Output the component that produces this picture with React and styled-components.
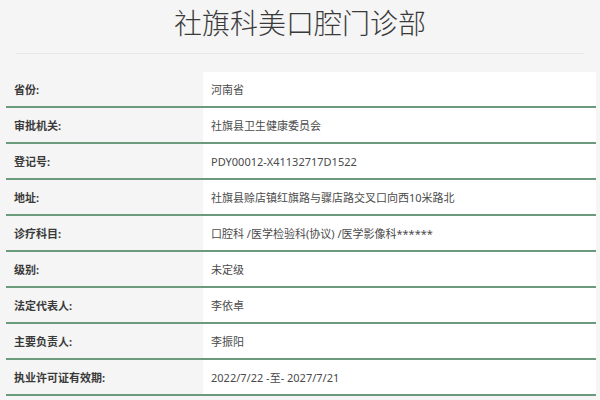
import React from 'react';
import styled, { createGlobalStyle } from 'styled-components';

const GlobalStyle = createGlobalStyle`
  body {
    margin: 0;
    background: #f5f5f5;
    font-family: "Noto Sans", "Noto Sans CJK SC", sans-serif;
  }
`;

const Page = styled.div`
  width: 600px;
  height: 400px;
  overflow: hidden;
`;

const Header = styled.div`
  height: 54px;
  border-bottom: 1px solid #e8e8e8;
  margin: 0 16px;
  box-sizing: border-box;
  padding-top: 5px;
  text-align: center;
`;

const Title = styled.h1`
  margin: 0;
  font-size: 28px;
  line-height: 34px;
  font-weight: 300;
  color: #3a3a3a;
  font-family: "Noto Sans CJK SC", sans-serif;
`;

const Table = styled.div`
  margin: 18px 4px 0 6px;
`;

const Row = styled.div`
  display: grid;
  grid-template-columns: 197px 1fr;
  height: 36px;
  border-bottom: 2px solid #6c9a7d;
  box-sizing: border-box;
`;

const Label = styled.div`
  display: flex;
  align-items: center;
  padding-left: 8px;
  font-size: 11px;
  font-weight: 700;
  color: #3a3a3a;
`;

const Value = styled.div`
  display: flex;
  align-items: center;
  padding-left: 8px;
  background: #fff;
  font-size: 11px;
  color: #4a4a4a;
`;

const rows = [
  ['省份:', '河南省'],
  ['审批机关:', '社旗县卫生健康委员会'],
  ['登记号:', 'PDY00012-X41132717D1522'],
  ['地址:', '社旗县赊店镇红旗路与骤店路交叉口向西10米路北'],
  ['诊疗科目:', '口腔科 /医学检验科(协议) /医学影像科******'],
  ['级别:', '未定级'],
  ['法定代表人:', '李依卓'],
  ['主要负责人:', '李振阳'],
  ['执业许可证有效期:', '2022/7/22 -至- 2027/7/21'],
];

export default function App() {
  return (
    <Page>
      <GlobalStyle />
      <Header>
        <Title>社旗科美口腔门诊部</Title>
      </Header>
      <Table>
        {rows.map(([label, value]) => (
          <Row key={label}>
            <Label>{label}</Label>
            <Value>{value}</Value>
          </Row>
        ))}
      </Table>
    </Page>
  );
}
